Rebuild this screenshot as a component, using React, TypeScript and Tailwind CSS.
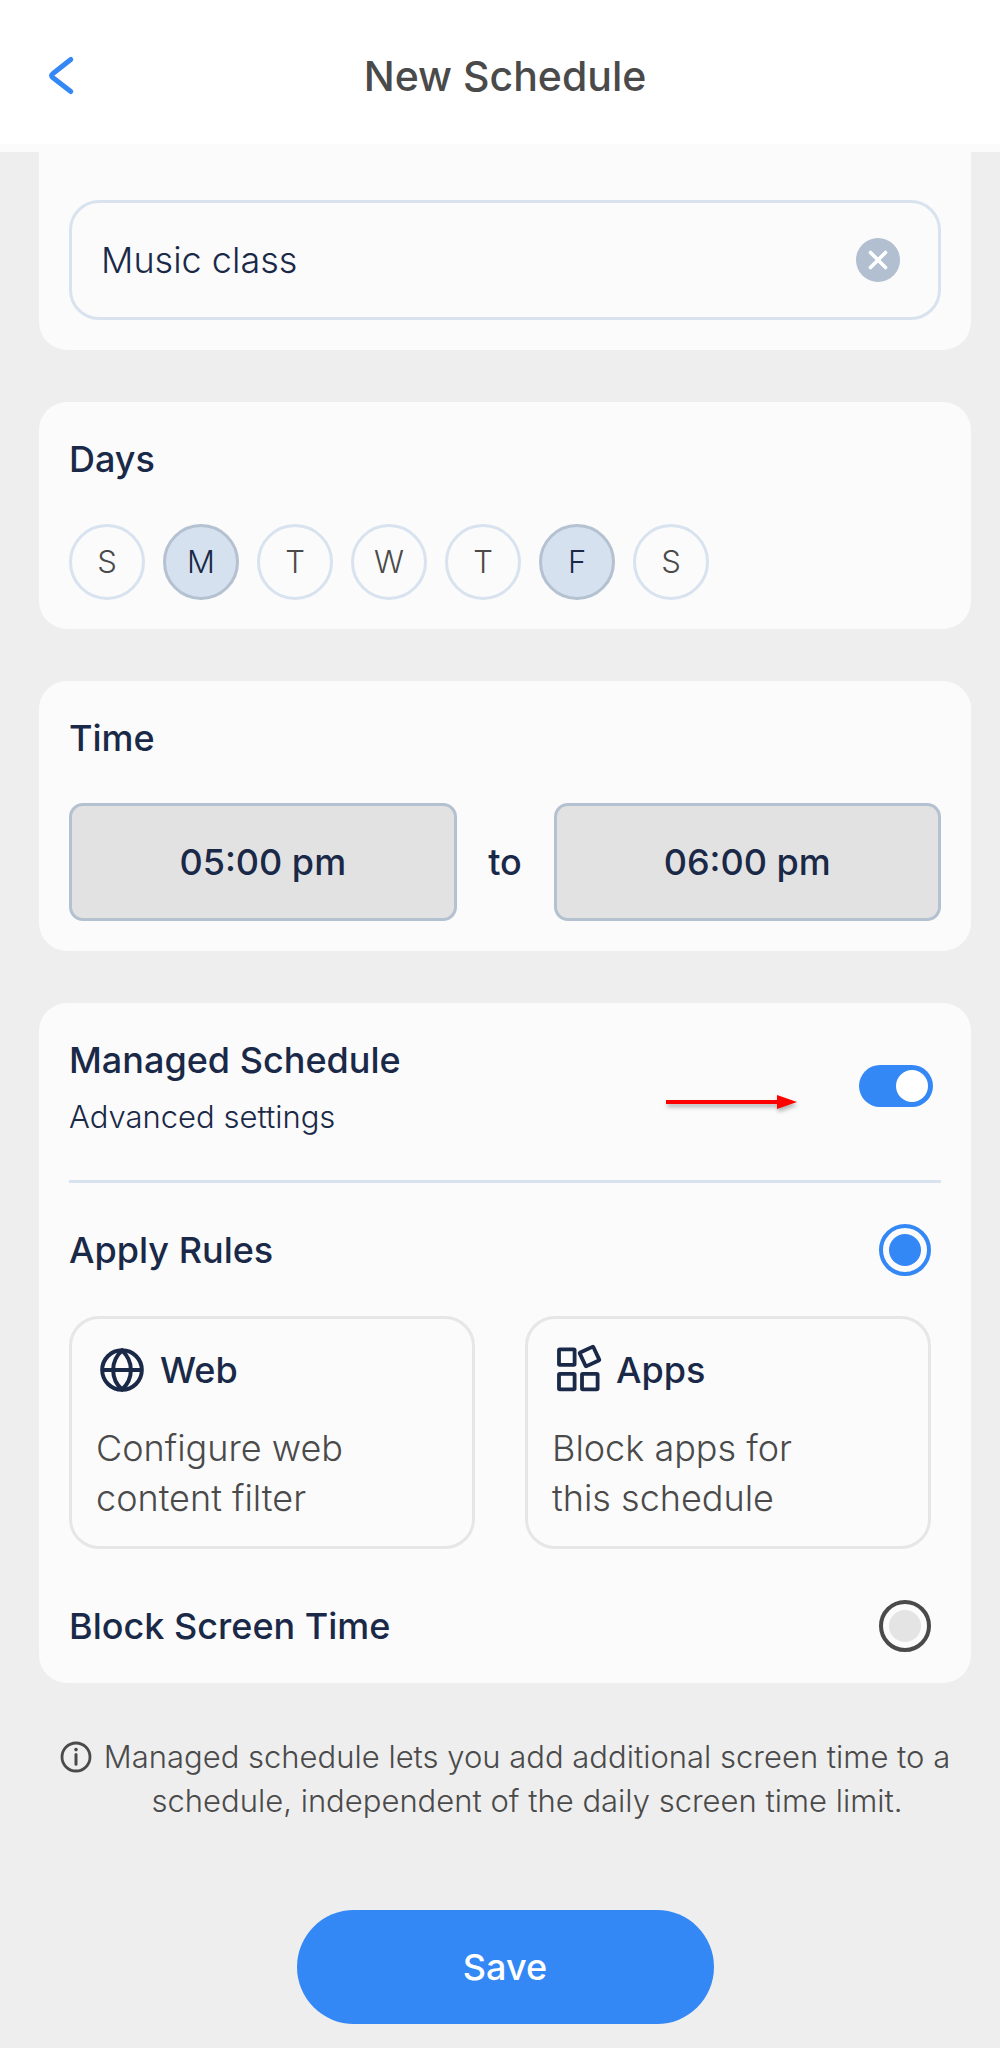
import { useState } from "react";

const DAYS = ["S", "M", "T", "W", "T", "F", "S"];
const DAY_NAMES = [
  "Sunday",
  "Monday",
  "Tuesday",
  "Wednesday",
  "Thursday",
  "Friday",
  "Saturday",
];

const cardClass = "rounded-[28px] bg-[#fbfbfb] px-[30px]";
const titleClass = "text-[36px] leading-[42px] font-medium text-[#1a2947]";
const radioClass =
  "size-[52px] shrink-0 appearance-none rounded-full border-4 border-[#4a4a4a] bg-[#e4e4e4] bg-clip-content p-[6px] checked:border-[#3388f6] checked:bg-[#3388f6]";
const ruleClass =
  "rounded-[30px] border-[3px] border-[#e6e6e6] px-6 pt-[25px] pb-[23px] text-left";
const timeClass =
  "h-[118px] flex-1 rounded-[14px] border-[3px] border-[#b4c1d1] bg-[#e2e2e2] text-[36px] font-medium text-[#1a2947]";

function ChevronIcon() {
  return (
    <svg width="30" height="42" viewBox="0 0 30 42" fill="none" aria-hidden="true">
      <path
        d="M23.8 4.5 L6 18.5 Q3 20.5 6 22.8 L23.8 36.5"
        stroke="#3388f6"
        strokeWidth="5"
        strokeLinecap="round"
        strokeLinejoin="round"
      />
    </svg>
  );
}

function ClearIcon() {
  return (
    <svg width="44" height="44" viewBox="0 0 44 44" aria-hidden="true">
      <circle cx="22" cy="22" r="22" fill="#b1bfd0" />
      <path
        d="M14.5 14.5 L29.5 29.5 M29.5 14.5 L14.5 29.5"
        stroke="#fff"
        strokeWidth="3.6"
        strokeLinecap="round"
      />
    </svg>
  );
}

function GlobeIcon() {
  return (
    <svg
      width="52"
      height="52"
      viewBox="0 0 52 52"
      fill="none"
      stroke="#1a2947"
      strokeWidth="4"
      aria-hidden="true"
    >
      <circle cx="26" cy="26" r="19.8" />
      <path d="M6 26 H46" />
      <path d="M26 6.5 C14.2 17 14.2 35 26 45.5 C37.8 35 37.8 17 26 6.5 Z" />
    </svg>
  );
}

function AppsIcon() {
  return (
    <svg
      width="52"
      height="52"
      viewBox="0 0 52 52"
      fill="none"
      stroke="#1a2947"
      strokeWidth="3.8"
      strokeLinejoin="round"
      aria-hidden="true"
    >
      <rect x="7" y="5.3" width="15.6" height="15.6" rx="0.8" />
      <rect x="7" y="29.8" width="15.6" height="15.6" rx="0.8" />
      <rect x="30" y="29.8" width="15.6" height="15.6" rx="0.8" />
      <rect
        x="30"
        y="5"
        width="15"
        height="15"
        rx="0.8"
        transform="rotate(-25 37.5 12.5)"
      />
    </svg>
  );
}

function InfoIcon() {
  return (
    <svg
      width="32"
      height="32"
      viewBox="0 0 32 32"
      fill="none"
      stroke="#4a4a4a"
      className="shrink-0"
      aria-hidden="true"
    >
      <circle cx="16" cy="16" r="14" strokeWidth="2.8" />
      <path d="M16 13.4 V23.2" strokeWidth="3" strokeLinecap="round" />
      <circle cx="16" cy="8.6" r="1.8" fill="#4a4a4a" stroke="none" />
    </svg>
  );
}

function ArrowMark() {
  return (
    <svg
      width="136"
      height="28"
      viewBox="0 0 136 28"
      className="mt-7 drop-shadow-[1px_3px_2px_rgba(0,0,0,0.3)]"
      aria-hidden="true"
    >
      <path d="M2 12 H113 V7 L133 14 L113 21 V16 H2 Z" fill="#ff0000" />
    </svg>
  );
}

export default function App() {
  const [name, setName] = useState("Music class");
  const [days, setDays] = useState<number[]>([1, 5]);
  const [managed, setManaged] = useState(true);
  const [mode, setMode] = useState<"rules" | "block">("rules");

  function toggleDay(i: number) {
    setDays((prev) =>
      prev.includes(i) ? prev.filter((d) => d !== i) : [...prev, i],
    );
  }

  return (
    <div className="flex min-h-screen flex-col bg-[#eeeeee] font-[Inter,'Liberation_Sans',sans-serif]">
      <header className="border-b-8 border-[#fbfbfb] bg-white pt-2">
        <div className="grid h-[136px] grid-cols-[1fr_auto_1fr] items-center pr-[29px] pl-[39px]">
          <button type="button" aria-label="Back" className="justify-self-start pl-2">
            <ChevronIcon />
          </button>
          <h1 className="text-[41px] leading-[48px] font-medium text-[#4a4a4a]">
            New Schedule
          </h1>
        </div>
      </header>

      <main className="flex flex-col gap-[52px] pr-[29px] pb-6 pl-[39px]">
        <section className="rounded-b-[28px] bg-[#fbfbfb] px-[30px] pt-12 pb-[30px]">
          <div className="flex h-[120px] items-center rounded-[30px] border-[3px] border-[#d8e3ef] pr-[38px] pl-[29px]">
            <input
              type="text"
              aria-label="Schedule name"
              value={name}
              onChange={(e) => setName(e.target.value)}
              className="min-w-0 flex-1 bg-transparent text-[36px] font-light text-[#1a2947] outline-none"
            />
            <button type="button" aria-label="Clear name" onClick={() => setName("")}>
              <ClearIcon />
            </button>
          </div>
        </section>

        <section className={`${cardClass} pt-9 pb-[29px]`}>
          <h2 className={titleClass}>Days</h2>
          <div className="mt-11 flex gap-[18px]">
            {DAYS.map((d, i) => (
              <button
                key={DAY_NAMES[i]}
                type="button"
                aria-label={DAY_NAMES[i]}
                aria-pressed={days.includes(i)}
                onClick={() => toggleDay(i)}
                className="size-[76px] rounded-full border-[3px] border-[#d8e3ef] text-[31px] font-light text-[#4a4a4a] aria-pressed:border-[#b4c1d1] aria-pressed:bg-[#d5e1ee] aria-pressed:text-[#1a2947]"
              >
                {d}
              </button>
            ))}
          </div>
        </section>

        <section className={`${cardClass} pt-9 pb-[30px]`}>
          <h2 className={titleClass}>Time</h2>
          <div className="mt-11 flex items-center">
            <button type="button" className={timeClass}>
              05:00 pm
            </button>
            <span className={`${titleClass} w-[97px] text-center`}>to</span>
            <button type="button" className={timeClass}>
              06:00 pm
            </button>
          </div>
        </section>

        <section className={`${cardClass} pt-9 pb-[31px]`}>
          <div className="flex items-center border-b-[3px] border-[#d8e3ef] pr-2 pb-[43px]">
            <label htmlFor="managed" className="flex flex-1 flex-col gap-4">
              <span className={titleClass}>Managed Schedule</span>
              <span className="text-[31px] leading-10 font-light text-[#1a2947]">
                Advanced settings
              </span>
            </label>
            <ArrowMark />
            <input
              id="managed"
              type="checkbox"
              role="switch"
              checked={managed}
              onChange={(e) => setManaged(e.target.checked)}
              className="mb-1 ml-[59px] flex h-[42px] w-[74px] appearance-none items-center rounded-full bg-[#b1bfd0] px-[5px] before:size-8 before:rounded-full before:bg-white checked:justify-end checked:bg-[#3388f6]"
            />
          </div>

          <div className="mr-[10px]">
            <div className="mt-[41px] flex items-center justify-between">
              <label htmlFor="rules" className={titleClass}>
                Apply Rules
              </label>
              <input
                id="rules"
                type="radio"
                name="mode"
                checked={mode === "rules"}
                onChange={() => setMode("rules")}
                className={radioClass}
              />
            </div>

            <div className="mt-10 grid grid-cols-2 gap-[50px]">
              <button type="button" className={ruleClass}>
                <span className="flex items-center gap-3">
                  <GlobeIcon />
                  <span className={titleClass}>Web</span>
                </span>
                <span className="mt-[27px] block text-[36px] leading-[50px] font-light text-[#4a4a4a]">
                  Configure web
                  <br />
                  content filter
                </span>
              </button>
              <button type="button" className={ruleClass}>
                <span className="flex items-center gap-3">
                  <AppsIcon />
                  <span className={titleClass}>Apps</span>
                </span>
                <span className="mt-[27px] block text-[36px] leading-[50px] font-light text-[#4a4a4a]">
                  Block apps for
                  <br />
                  this schedule
                </span>
              </button>
            </div>

            <div className="mt-[51px] flex items-center justify-between">
              <label htmlFor="block" className={titleClass}>
                Block Screen Time
              </label>
              <input
                id="block"
                type="radio"
                name="mode"
                checked={mode === "block"}
                onChange={() => setMode("block")}
                className={radioClass}
              />
            </div>
          </div>
        </section>

        <div className="flex justify-center gap-3 text-[31px] leading-[44px] font-light text-[#4a4a4a]">
          <div className="flex h-11 items-center">
            <InfoIcon />
          </div>
          <p className="text-center">
            Managed schedule lets you add additional screen time to a
            <br />
            schedule, independent of the daily screen time limit.
          </p>
        </div>

        <button
          type="button"
          className="mt-[35px] h-[114px] w-[417px] self-center rounded-full bg-[#3388f6] text-[36px] font-medium text-white"
        >
          Save
        </button>
      </main>
    </div>
  );
}
